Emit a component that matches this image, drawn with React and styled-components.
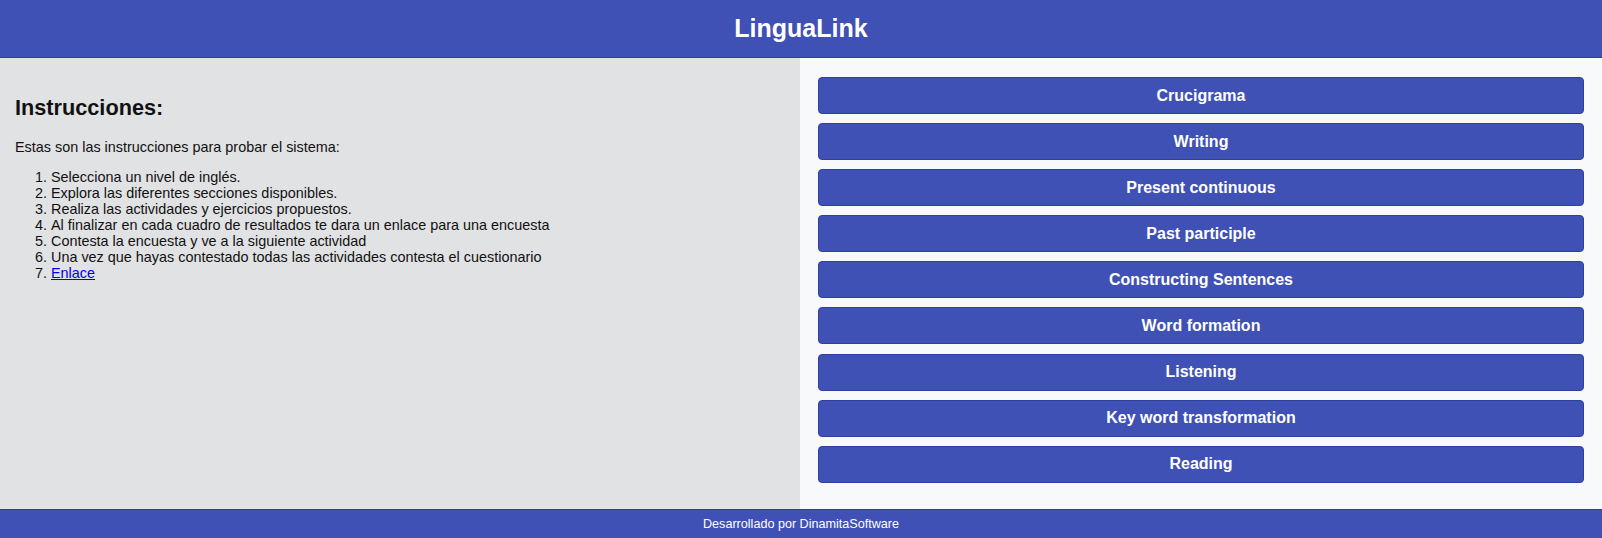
import React from "react";
import styled, { createGlobalStyle } from "styled-components";

const actividades = [
  "Crucigrama",
  "Writing",
  "Present continuous",
  "Past participle",
  "Constructing Sentences",
  "Word formation",
  "Listening",
  "Key word transformation",
  "Reading",
];

const pasos = [
  "Selecciona un nivel de inglés.",
  "Explora las diferentes secciones disponibles.",
  "Realiza las actividades y ejercicios propuestos.",
  "Al finalizar en cada cuadro de resultados te dara un enlace para una encuesta",
  "Contesta la encuesta y ve a la siguiente actividad",
  "Una vez que hayas contestado todas las actividades contesta el cuestionario",
];

export default function App() {
  return (
    <>
      <GlobalStyle />
      <Page>
        <Header>
          <Title>LinguaLink</Title>
        </Header>
        <Main>
          <Instructions>
            <H2>Instrucciones:</H2>
            <P>Estas son las instrucciones para probar el sistema:</P>
            <List>
              {pasos.map((p) => (
                <li key={p}>{p}</li>
              ))}
              <li>
                <Enlace href="#">Enlace</Enlace>
              </li>
            </List>
          </Instructions>
          <Menu>
            {actividades.map((a) => (
              <MenuButton key={a}>{a}</MenuButton>
            ))}
          </Menu>
        </Main>
        <Footer>Desarrollado por DinamitaSoftware</Footer>
      </Page>
    </>
  );
}

const GlobalStyle = createGlobalStyle`
  html, body {
    margin: 0;
    padding: 0;
  }
  body {
    font-family: "Liberation Sans", Arial, sans-serif;
    color: #111;
  }
  * {
    box-sizing: border-box;
  }
`;

const Page = styled.div`
  display: flex;
  flex-direction: column;
  min-height: 100vh;
`;

const Header = styled.header`
  height: 58px;
  display: flex;
  align-items: center;
  justify-content: center;
  background: #3f51b5;
  border-bottom: 1px solid #2a3ea8;
`;

const Title = styled.h1`
  margin: 0;
  margin-top: -1px;
  font-size: 25px;
  font-weight: 700;
  color: #fff;
`;

const Main = styled.main`
  flex: 1;
  display: grid;
  grid-template-columns: 800px 1fr;
`;

const Instructions = styled.section`
  background: #e1e2e3;
  padding: 37px 15px 15px;
  font-size: 14.4px;
  line-height: 16px;
`;

const H2 = styled.h2`
  margin: 0 0 19px;
  font-size: 21.7px;
  line-height: 25px;
  font-weight: 700;
`;

const P = styled.p`
  margin: 0 0 14px;
`;

const List = styled.ol`
  margin: 0;
  padding-left: 36px;
`;

const Enlace = styled.a`
  color: #0000ee;
`;

const Menu = styled.nav`
  background: #f8f9fa;
  padding: 19px 18px 18px;
  display: flex;
  flex-direction: column;
  gap: 9.1px;
`;

const MenuButton = styled.button`
  height: 37px;
  width: 100%;
  border: 1px solid #2f3f9e;
  border-radius: 4px;
  background: #3f51b5;
  color: #fff;
  font-family: "Liberation Sans", Arial, sans-serif;
  font-size: 16px;
  font-weight: 700;
  cursor: pointer;
  &:hover {
    background: #3546a3;
  }
`;

const Footer = styled.footer`
  height: 29px;
  display: flex;
  align-items: center;
  justify-content: center;
  background: #3f51b5;
  border-top: 1px solid #2a3ea8;
  color: #fff;
  font-size: 12.6px;
`;
